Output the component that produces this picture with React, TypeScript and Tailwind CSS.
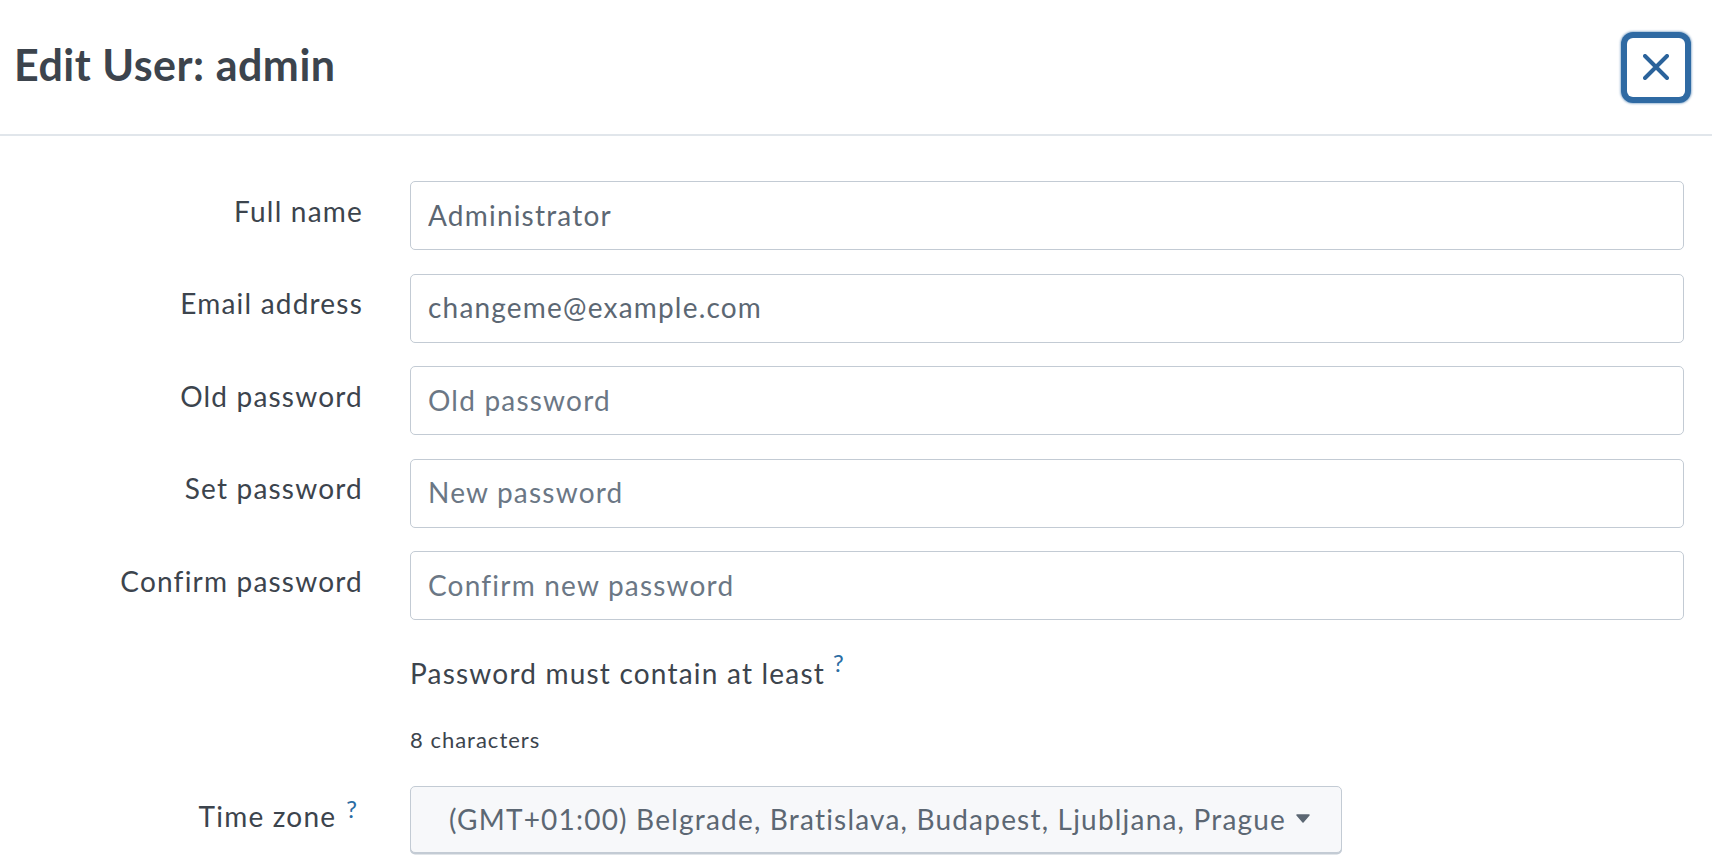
import React from "react";

const Label = ({ children }: { children: React.ReactNode }) => (
  <div className="flex h-[69px] items-center justify-end pb-[10px] text-[28px] leading-[34px] tracking-[1.2px] text-[#3c444d]">
    {children}
  </div>
);

const Field = ({ value, placeholder }: { value?: string; placeholder?: string }) => (
  <input
    readOnly
    defaultValue={value}
    placeholder={placeholder}
    className="h-[69px] w-full rounded-[5px] border-[1.5px] border-[#c3cbd4] bg-white px-[17px] pb-[2px] text-[28px] tracking-[1.2px] text-[#5c6773] outline-none placeholder:text-[#6b7785]"
  />
);

const Help = ({ className }: { className: string }) => (
  <span className={"inline-block align-top text-[24px] leading-[24px] tracking-normal text-[#2b6ca3] " + className}>?</span>
);

export default function App() {
  const rows: { label: string; value?: string; placeholder?: string }[] = [
    { label: "Full name", value: "Administrator" },
    { label: "Email address", value: "changeme@example.com" },
    { label: "Old password", placeholder: "Old password" },
    { label: "Set password", placeholder: "New password" },
    { label: "Confirm password", placeholder: "Confirm new password" },
  ];
  return (
    <div className="h-[868px] w-[1712px] overflow-hidden bg-white font-['Lato',sans-serif]">
      <header className="flex h-[136px] items-center justify-between border-b-2 border-[#e1e6eb] pl-[14px] pr-[27px]">
        <h1 className="mb-[5px] text-[43px] font-bold leading-[52px] tracking-[0.5px] text-[#3c444d]">Edit User: admin</h1>
        <button className="flex h-[59px] w-[58px] items-center justify-center rounded-[6px] bg-white shadow-[0_0_0_6px_#2f6aa3,0_0_2px_7px_rgba(47,106,163,0.45)]">
          <svg width="26" height="26" viewBox="0 0 26 26" fill="none">
            <path d="M2 2 L24 24 M24 2 L2 24" stroke="#2b639b" strokeWidth="4" strokeLinecap="round" />
          </svg>
        </button>
      </header>
      <div className="grid grid-cols-[363px_1fr] gap-x-[47px] gap-y-[23.5px] pr-[28px] pt-[45px]">
        {rows.map((r) => (
          <React.Fragment key={r.label}>
            <Label>{r.label}</Label>
            <Field value={r.value} placeholder={r.placeholder} />
          </React.Fragment>
        ))}
      </div>
      <div className="grid grid-cols-[363px_1fr] gap-x-[47px] pr-[28px]">
        <div />
        <div>
          <div className="mt-[36px] flex items-start text-[28px] leading-[34px] tracking-[1.2px] text-[#3c444d]">
            <span>Password must contain at least</span>
            <Help className="ml-[8px] -mt-[5px]" />
          </div>
          <div className="mt-[37px] text-[22px] leading-[26px] tracking-[1px] text-[#3c444d]">8 characters</div>
        </div>
      </div>
      <div className="mt-[33px] grid grid-cols-[363px_1fr] gap-x-[47px] pr-[28px]">
        <div className="flex h-[67px] items-center justify-end pb-[8px] text-[28px] leading-[34px] tracking-[1.2px] text-[#3c444d]">
          <span>Time zone</span>
          <Help className="ml-[10px] mr-[6px] -mt-[14px]" />
        </div>
        <div>
          <button className="flex h-[67px] w-[932px] items-center gap-[10px] rounded-[5px] border-[1.5px] border-[#c3cbd4] bg-[#f7f8fa] pb-[2px] pl-[38px] text-[28px] tracking-[1.2px] text-[#5c6773] shadow-[0_1.5px_0_#c3cbd4]">
            <span className="whitespace-nowrap">(GMT+01:00) Belgrade, Bratislava, Budapest, Ljubljana, Prague</span>
            <svg width="14" height="9" viewBox="0 0 14 9" className="shrink-0">
              <path d="M1 1 L13 1 L7 8 Z" fill="#5c6773" stroke="#5c6773" strokeWidth="1.5" strokeLinejoin="round" />
            </svg>
          </button>
        </div>
      </div>
    </div>
  );
}
